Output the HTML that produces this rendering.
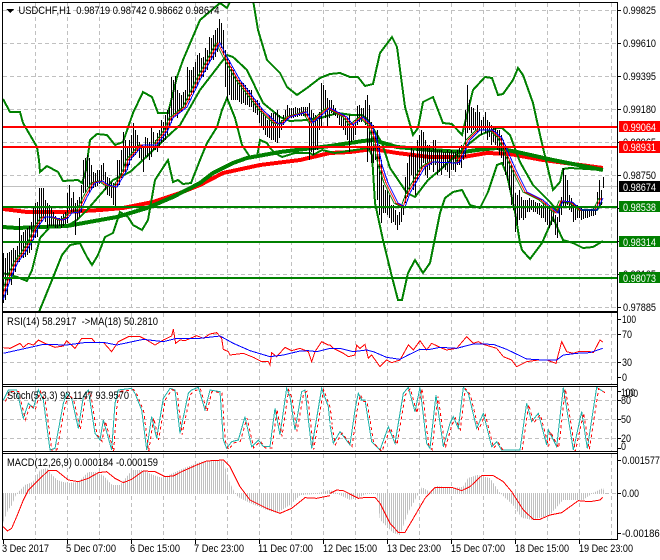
<!DOCTYPE html>
<html><head><meta charset="utf-8"><title>USDCHF,H1</title>
<style>html,body{margin:0;padding:0;background:#fff;width:660px;height:560px;overflow:hidden}svg{display:block}text{font-family:"Liberation Sans",sans-serif;font-size:11px;fill:#000;white-space:pre}.w{fill:#fff}</style></head><body>
<svg width="660" height="560" viewBox="0 0 660 560" xmlns="http://www.w3.org/2000/svg">
<defs>
<clipPath id="cm"><rect x="3" y="3" width="614" height="308"/></clipPath>
<clipPath id="cs"><rect x="3" y="387" width="614" height="64"/></clipPath>
<pattern id="hp" patternUnits="userSpaceOnUse" width="2" height="10"><rect x="1" y="0" width="1" height="10" fill="#c0c0c0" shape-rendering="crispEdges"/></pattern>
<path id="fast" fill="none" d="M3 300L12 275 18 262 25 253 33 240 38 227 45 217 53 217 63 220 68 218 72 213 80 212 87 197 95 183 103 181 108 185 117 187 127 170 130 160 143 145 157 145 168 130 173 118 187 107 200 80 207 67 220 43 227 57 240 80 263 110 277 123 283 124 290 117 307 112 313 123 330 108 347 117 353 125 363 117 372 125 377 140 382 165 388 183 398 203 405 207 410 193 425 167 433 162 457 163 460 162 470 140 480 130 493 130 502 138 515 168 527 192 543 200 558 213 563 201 572 202 582 210 597 210 603 198"/>
<path id="stL" fill="none" d="M10 270L25 240 50 240 70 325 85 280 100 295 115 240 130 270 150 420 165 415 190 280 200 250 215 265 235 355 250 260 265 240 285 370 300 390 310 330 335 420 345 280 355 240 395 235 405 250 425 300 440 420 455 320 470 385 490 265 510 235 525 240 540 370 565 250 575 240 595 232 615 300 630 240 660 245 670 390 680 415 695 395 715 390 735 320 755 410 775 390 790 410 810 410 825 295 840 375 860 235 870 260 885 360 905 245 915 240 935 415 965 235 985 290 990 340"/>
<path id="stR" fill="none" d="M0 345L10 400 30 365 60 405 75 300 85 250 95 270 105 270 125 395 150 420 175 350 195 400 220 250 235 232 255 305 270 232 290 400 300 415 318 255 340 410 360 340 370 320 385 355 400 232 415 250 440 355 460 310 485 410 500 395 515 420 570 420 590 280 605 335 625 310 650 405 655 360 680 410 700 232 730 420 755 305 772 415 800 232 820 245"/>
</defs>
<rect width="660" height="560" fill="#fff"/>
<g shape-rendering="crispEdges">
<!-- grid -->
<path fill="none" stroke="#c0c0c0" stroke-dasharray="4 3" d="M35.5 3V311M67.5 3V311M99.5 3V311M131.5 3V311M163.5 3V311M195.5 3V311M227.5 3V311M259.5 3V311M291.5 3V311M323.5 3V311M355.5 3V311M387.5 3V311M419.5 3V311M451.5 3V311M483.5 3V311M515.5 3V311M547.5 3V311M579.5 3V311M611.5 3V311
M3 10.5H617M3 43.5H617M3 76.5H617M3 109.5H617M3 142.5H617M3 175.5H617M3 208.5H617M3 241.5H617M3 274.5H617M3 307.5H617
M35.5 313V384M67.5 313V384M99.5 313V384M131.5 313V384M163.5 313V384M195.5 313V384M227.5 313V384M259.5 313V384M291.5 313V384M323.5 313V384M355.5 313V384M387.5 313V384M419.5 313V384M451.5 313V384M483.5 313V384M515.5 313V384M547.5 313V384M579.5 313V384M611.5 313V384M3 334.5H617M3 362.5H617
M35.5 387V451M67.5 387V451M99.5 387V451M131.5 387V451M163.5 387V451M195.5 387V451M227.5 387V451M259.5 387V451M291.5 387V451M323.5 387V451M355.5 387V451M387.5 387V451M419.5 387V451M451.5 387V451M483.5 387V451M515.5 387V451M547.5 387V451M579.5 387V451M611.5 387V451M3 400.5H617M3 419.5H617M3 438.5H617
M35.5 454V539M67.5 454V539M99.5 454V539M131.5 454V539M163.5 454V539M195.5 454V539M227.5 454V539M259.5 454V539M291.5 454V539M323.5 454V539M355.5 454V539M387.5 454V539M419.5 454V539M451.5 454V539M483.5 454V539M515.5 454V539M547.5 454V539M579.5 454V539M611.5 454V539M605 493.5H617"/>
<path fill="none" stroke="#c0c0c0" d="M3 186.5H617"/>
<g clip-path="url(#cm)">
<!-- thick MAs -->
<path fill="none" stroke="#ff0000" stroke-width="4" d="M3 209L27 212 67 212 100 210 123 208 153 202 180 193 200 185 223 173 260 165 300 160 330 153 350 152 373 149 397 153 430 157 463 157 487 153 510 154 543 160 603 168"/>
<path fill="none" stroke="#008000" stroke-width="4" d="M3 227L17 228 67 226 100 220 117 217 147 208 173 197 200 183 213 173 233 163 247 158 280 152 330 146 363 141 373 140 397 147 430 150 463 152 477 150 497 148 517 152 553 160 603 170"/>
<!-- bollinger -->
<path fill="none" stroke="#008000" stroke-width="2" d="M3 99L10 112 20 112 23 123 30 135 37 147 39 160 40 172 47 166 58 172 63 181 78 180 82 183 86 170 90 140 97 134 107 135 115 145 123 142 133 113 143 92 152 97 158 113 168 113 177 77 183 60 200 20 220 3 227 8 232 -2 240 -20 250 -20 253 0 258 30 267 60 280 73 287 87 297 95 307 88 320 78 330 74 340 73 350 77 358 77 365 86 373 84 380 53 392 37 397 47 405 107 413 135 418 128 423 102 433 97 443 123 452 124 462 135 473 90 485 77 492 78 498 95 503 94 513 80 518 68 523 75 533 103 540 135 553 190 560 182 563 169 570 168 603 170"/>
<path fill="none" stroke="#008000" stroke-width="2" d="M39 312L52 280 62 255 70 245 80 243 87 257 92 265 98 255 105 237 113 233 120 212 128 217 133 225 142 230 148 220 155 180 168 160 173 182 178 180 183 184 191 183 200 160 207 143 217 127 222 110 227 98 235 118 242 145 250 157 257 157 260 140 267 143 270 148 275 153 282 157 295 153 310 153 313 155 322 150 335 153 355 150 368 148 372 155 375 203 383 240 392 277 398 300 402 300 408 273 415 260 423 273 430 263 440 213 445 198 453 192 462 190 470 205 480 208 488 192 497 165 502 163 507 175 515 212 520 243 522 250 530 259 542 243 553 218 563 240 573 243 583 248 593 247 603 241"/>
<path fill="none" stroke="#008000" stroke-width="2" d="M3 273L17 277 27 281 32 270 40 238 50 227 67 226 77 220 87 210 113 180 130 172 143 160 167 137 180 125 200 90 227 55 233 57 247 70 263 103 280 117 290 121 307 120 320 118 338 113 352 115 362 115 368 120 382 143 390 168 407 193 415 197 428 180 440 170 453 158 470 143 480 135 497 128 502 128 510 135 520 162 533 185 550 202 558 212 562 202 573 203 580 210 597 210 602 202"/>
<!-- price bars -->
<path fill="none" stroke="#000" transform="translate(.5,0)" d="M3 253V303M5 258V300M7 253V295M9 252V282M11 250V285M13 248V275M15 250V272M17 246V262M19 218V262M21 235V258M23 232V258M25 230V257M27 228V255M29 226V253M31 222V250M33 207V240M35 203V238M37 202V237M39 188V228M41 188V222M43 188V218M45 200V222M47 203V228M49 205V226M51 208V226M53 212V226M55 216V228M57 218V228M59 218V226M61 216V228M63 214V226M65 212V224M67 193V223M69 185V210M71 198V214M73 192V212M75 203V235M77 200V220M79 197V217M81 185V212M83 160V193M85 158V192M87 155V187M89 158V192M91 165V190M93 172V188M95 173V187M97 170V186M99 170V184M101 165V182M103 163V180M105 172V190M107 177V195M109 178V196M111 182V198M113 183V205M115 183V207M117 160V187M119 160V185M121 150V178M123 132V172M125 140V172M127 148V170M129 140V165M131 135V160M133 123V157M135 130V155M137 135V152M139 142V158M141 145V160M143 146V172M145 137V157M147 138V157M149 142V160M151 127V157M153 132V150M155 140V150M157 133V152M159 130V148M161 120V143M163 122V142M165 115V140M167 110V135M169 107V128M171 77V123M173 80V118M175 76V115M177 90V118M179 93V113M181 95V112M183 92V108M185 90V107M187 67V100M189 70V100M191 70V95M193 67V93M195 62V88M197 55V85M199 53V80M201 58V78M203 57V77M205 48V72M207 50V70M209 37V63M211 38V60M213 35V60M215 30V57M217 28V52M219 19V43M221 23V48M223 30V55M225 50V87M227 57V100M229 60V95M231 67V100M233 70V100M235 75V100M237 80V100M239 80V102M241 82V104M243 83V103M245 85V105M247 88V105M249 90V107M251 90V107M253 98V112M255 100V113M257 100V115M259 103V123M261 108V128M263 113V130M265 116V135M267 120V137M269 115V138M271 113V140M273 113V140M275 112V142M277 110V143M279 115V138M281 120V130M283 115V125M285 110V122M287 105V120M289 108V118M291 108V118M293 108V118M295 107V117M297 108V117M299 108V116M301 107V116M303 107V116M305 107V116M307 107V117M309 103V160M311 110V152M313 113V155M315 115V150M317 120V150M319 112V130M321 83V128M323 85V110M325 90V118M327 98V127M329 100V118M331 100V113M333 105V115M335 108V116M337 112V118M339 115V125M341 115V128M343 117V130M345 118V135M347 118V140M349 115V152M351 127V142M353 125V140M355 120V135M357 106V125M359 105V122M361 108V122M363 108V118M365 100V125M367 95V162M369 105V150M371 122V163M373 125V163M375 133V160M377 130V200M379 145V215M381 160V223M383 185V213M385 190V213M387 190V215M389 195V218M391 205V223M393 205V222M395 210V225M397 215V230M399 212V225M401 205V222M403 205V215M405 177V203M407 163V197M409 155V190M411 148V175M413 150V190M415 155V195M417 140V180M419 135V175M421 130V170M423 132V163M425 140V175M427 145V178M429 145V170M431 150V165M433 140V172M435 140V165M437 150V175M439 150V172M441 150V175M443 152V168M445 152V170M447 150V172M449 152V178M451 150V170M453 152V170M455 152V172M457 150V165M459 148V165M461 145V168M463 145V160M465 110V157M467 85V133M469 100V130M471 107V133M473 108V130M475 112V130M477 105V133M479 112V130M481 120V135M483 117V130M485 112V133M487 120V140M489 122V137M491 125V145M493 128V142M495 128V145M497 130V150M499 130V155M501 135V158M503 140V165M505 145V175M507 155V180M509 160V190M511 165V205M513 170V210M515 193V232M517 195V225M519 190V220M521 197V218M523 200V220M525 200V218M527 200V212M529 198V212M531 200V210M533 200V212M535 202V212M537 203V214M539 203V215M541 205V218M543 203V218M545 203V222M547 207V225M549 207V228M551 210V225M553 210V222M555 215V235M557 217V238M559 205V222M561 197V215M563 168V207M565 175V207M567 180V205M569 195V210M571 198V212M573 203V222M575 205V220M577 205V218M579 208V218M581 208V220M583 210V219M585 210V218M587 210V218M589 210V217M591 209V216M593 208V216M595 205V215M597 192V210M599 180V207M601 190V205M603 177V188"/>
<!-- fast MAs -->
<use href="#fast" stroke="#008000" transform="translate(-4,0)"/>
<use href="#fast" stroke="#ff0000" transform="translate(-2,0)"/>
<use href="#fast" stroke="#0000ff"/>
</g>
<!-- horizontal levels -->
<path fill="none" stroke="#ff0000" stroke-width="2" d="M3 127H617M3 147H617"/>
<path fill="none" stroke="#008000" stroke-width="2" d="M3 207H617M3 242H617M3 278H617"/>
<!-- RSI -->
<g transform="translate(0,310) scale(.33333)" fill="none" stroke-width="3">
<path stroke="#ff0000" d="M10 113L30 115 60 100 70 112 85 100 100 105 115 90 135 100 165 112 190 108 200 92 225 115 245 85 275 85 285 97 310 97 335 125 355 95 385 80 420 80 440 90 465 105 490 90 515 78 520 58 527 100 540 90 555 92 590 77 610 85 630 72 650 68 665 85 670 118 685 125 690 135 730 130 760 142 785 155 805 155 810 165 815 128 830 140 855 112 875 122 900 115 925 125 935 155 945 125 965 95 985 105 990 105"/>
<path stroke="#0000ff" d="M10 130L100 110 130 103 200 105 260 97 310 97 350 105 430 88 490 95 530 85 600 85 660 78 700 100 750 122 810 140 850 135 900 123 925 122 950 125 990 115"/>
</g>
<g transform="translate(330,310) scale(.33333)" fill="none" stroke-width="3">
<path stroke="#ff0000" d="M0 105L10 115 40 130 55 140 75 135 80 105 90 115 105 103 115 145 125 135 150 170 170 150 185 158 210 150 235 105 250 120 270 92 290 120 305 100 330 112 350 120 380 115 410 80 430 100 445 95 460 103 500 115 520 140 545 150 560 170 590 155 625 150 650 150 678 160 695 95 710 125 730 130 745 125 780 125 790 128 810 90 818 96"/>
<path stroke="#0000ff" d="M0 115L30 115 70 125 110 120 130 125 170 142 210 148 235 135 270 118 300 118 330 112 380 115 430 102 490 103 530 118 590 147 640 150 680 150 700 135 740 130 780 128 818 115"/>
</g>
<!-- Stoch -->
<g clip-path="url(#cs)"><g transform="translate(0,310) scale(.33333)" stroke-width="3">
<use href="#stL" stroke="#20b2aa"/><use href="#stL" stroke="#ff0000" stroke-dasharray="9 9" transform="translate(6,4)"/>
</g>
<g transform="translate(330,310) scale(.33333)" stroke-width="3">
<use href="#stR" stroke="#20b2aa"/><use href="#stR" stroke="#ff0000" stroke-dasharray="9 9" transform="translate(6,4)"/>
</g></g>
<!-- MACD -->
<path fill="url(#hp)" d="M3 493L3 523 8 510 12 505 15 497 18 492 25 485 33 482 40 470 47 468 52 475 57 480 67 483 78 482 88 472 95 472 103 475 112 485 120 485 132 470 143 470 153 475 163 478 173 473 187 467 200 462 213 460 223 460 230 483 235 493 238 497 250 503 267 510 277 513 290 505 300 495 315 494 330 490 350 500 360 497 368 493 377 493 380 520 393 533 400 535 408 513 415 500 422 487 430 492 437 486 453 488 463 487 468 478 477 475 490 478 500 493 513 505 522 518 533 520 550 515 563 500 583 500 593 493 603 488 605 493Z"/>
<path fill="none" stroke="#c0c0c0" d="M3 493.5H605" stroke-dasharray="1 1"/>
<g transform="translate(0,450) scale(.33333)" fill="none" stroke="#ff0000" stroke-width="3"><path d="M10 230L22 243 35 235 50 200 70 150 85 120 110 95 145 62 170 62 205 90 235 95 265 85 295 68 320 65 345 85 370 98 395 88 430 63 465 65 495 80 520 78 545 65 590 45 620 33 670 30 690 50 720 110 750 150 800 175 840 190 875 175 915 143 950 145 990 137"/></g>
<g transform="translate(330,450) scale(.33333)" fill="none" stroke="#ff0000" stroke-width="3"><path d="M0 130L20 120 40 122 85 145 110 142 135 142 150 160 180 220 205 247 225 247 250 205 285 145 315 112 365 112 395 122 420 110 455 77 490 77 520 95 545 125 580 180 610 208 630 208 660 195 695 188 745 152 780 155 810 150 818 142"/></g>
<!-- frames -->
<path fill="none" stroke="#000" d="M2.5 2.5H617.5V539.5H2.5ZM2.5 311.5H617.5M2.5 312.5H617.5M2.5 384.5H617.5M2.5 386.5H617.5M2.5 451.5H617.5M2.5 453.5H617.5"/>
<path fill="none" stroke="#000" d="M618 10.5H621M618 43.5H621M618 76.5H621M618 109.5H621M618 142.5H621M618 175.5H621M618 208.5H621M618 241.5H621M618 274.5H621M618 307.5H621M618 319.5H621M618 334.5H621M618 362.5H621M618 377.5H621M618 391.5H621M618 400.5H621M618 419.5H621M618 438.5H621M618 448.5H621M618 460.5H621M618 493.5H621M618 533.5H621
M3.5 540V544M67.5 540V544M131.5 540V544M195.5 540V544M259.5 540V544M323.5 540V544M387.5 540V544M451.5 540V544M515.5 540V544M579.5 540V544"/>
<!-- title triangle -->
<path d="M6 9H14L10 13Z" fill="#000"/>
</g>
<!-- text -->
<text x="18.5" y="14" textLength="201" lengthAdjust="spacingAndGlyphs" xml:space="preserve">USDCHF,H1  0.98719 0.98742 0.98662 0.98674</text>
<text x="7" y="325" textLength="151" lengthAdjust="spacingAndGlyphs" xml:space="preserve">RSI(14) 58.2917  -&gt;MA(18) 50.2810</text>
<text x="7" y="399" textLength="122" lengthAdjust="spacingAndGlyphs">Stoch(5,3,3) 92.1147 93.9570</text>
<text x="7" y="466" textLength="151" lengthAdjust="spacingAndGlyphs">MACD(12,26,9) 0.000184 -0.000159</text>
<g lengthAdjust="spacingAndGlyphs">
<text x="623" y="14" textLength="33" lengthAdjust="spacingAndGlyphs">0.99825</text>
<text x="623" y="47" textLength="33" lengthAdjust="spacingAndGlyphs">0.99610</text>
<text x="623" y="80" textLength="33" lengthAdjust="spacingAndGlyphs">0.99395</text>
<text x="623" y="113" textLength="33" lengthAdjust="spacingAndGlyphs">0.99180</text>
<text x="623" y="146" textLength="33" lengthAdjust="spacingAndGlyphs">0.98965</text>
<text x="623" y="179" textLength="33" lengthAdjust="spacingAndGlyphs">0.98750</text>
<text x="623" y="278" textLength="33" lengthAdjust="spacingAndGlyphs">0.98105</text>
<text x="623" y="311" textLength="33" lengthAdjust="spacingAndGlyphs">0.97885</text>
</g>
<g shape-rendering="crispEdges">
<rect x="619" y="121" width="41" height="11" fill="#ff0000"/>
<rect x="619" y="141" width="41" height="12" fill="#ff0000"/>
<rect x="619" y="181" width="41" height="11" fill="#000"/>
<rect x="619" y="201" width="41" height="11" fill="#008000"/>
<rect x="619" y="236" width="41" height="11" fill="#008000"/>
<rect x="619" y="272" width="41" height="11" fill="#008000"/>
</g>
<text class="w" x="623" y="131" textLength="33" lengthAdjust="spacingAndGlyphs">0.99064</text>
<text class="w" x="623" y="151" textLength="33" lengthAdjust="spacingAndGlyphs">0.98931</text>
<text class="w" x="623" y="191" textLength="33" lengthAdjust="spacingAndGlyphs">0.98674</text>
<text class="w" x="623" y="211" textLength="33" lengthAdjust="spacingAndGlyphs">0.98538</text>
<text class="w" x="623" y="246" textLength="33" lengthAdjust="spacingAndGlyphs">0.98314</text>
<text class="w" x="623" y="282" textLength="33" lengthAdjust="spacingAndGlyphs">0.98073</text>
<text x="622" y="323" textLength="14" lengthAdjust="spacingAndGlyphs">100</text>
<text x="622" y="338" textLength="10" lengthAdjust="spacingAndGlyphs">70</text>
<text x="622" y="366" textLength="10" lengthAdjust="spacingAndGlyphs">30</text>
<text x="622" y="381" textLength="5" lengthAdjust="spacingAndGlyphs">0</text>
<text x="621" y="396" textLength="14" lengthAdjust="spacingAndGlyphs">100</text>
<text x="624" y="397" textLength="14" lengthAdjust="spacingAndGlyphs">100</text>
<text x="621" y="404" textLength="10" lengthAdjust="spacingAndGlyphs">80</text>
<text x="621" y="423" textLength="10" lengthAdjust="spacingAndGlyphs">50</text>
<text x="621" y="442" textLength="10" lengthAdjust="spacingAndGlyphs">20</text>
<text x="621" y="450" textLength="5" lengthAdjust="spacingAndGlyphs">0</text>
<text x="622" y="464" textLength="38" lengthAdjust="spacingAndGlyphs">0.001577</text>
<text x="622" y="497" textLength="17" lengthAdjust="spacingAndGlyphs">0.00</text>
<text x="622" y="537" textLength="43" lengthAdjust="spacingAndGlyphs">-0.001867</text>
<text x="2" y="552" textLength="47" lengthAdjust="spacingAndGlyphs">3 Dec 2017</text>
<text x="66" y="552" textLength="50" lengthAdjust="spacingAndGlyphs">5 Dec 07:00</text>
<text x="130" y="552" textLength="50" lengthAdjust="spacingAndGlyphs">6 Dec 15:00</text>
<text x="194" y="552" textLength="50" lengthAdjust="spacingAndGlyphs">7 Dec 23:00</text>
<text x="258" y="552" textLength="55" lengthAdjust="spacingAndGlyphs">11 Dec 07:00</text>
<text x="323" y="552" textLength="54" lengthAdjust="spacingAndGlyphs">12 Dec 15:00</text>
<text x="387" y="552" textLength="54" lengthAdjust="spacingAndGlyphs">13 Dec 23:00</text>
<text x="451" y="552" textLength="54" lengthAdjust="spacingAndGlyphs">15 Dec 07:00</text>
<text x="515" y="552" textLength="54" lengthAdjust="spacingAndGlyphs">18 Dec 15:00</text>
<text x="579" y="552" textLength="54" lengthAdjust="spacingAndGlyphs">19 Dec 23:00</text>
</svg>
</body></html>
